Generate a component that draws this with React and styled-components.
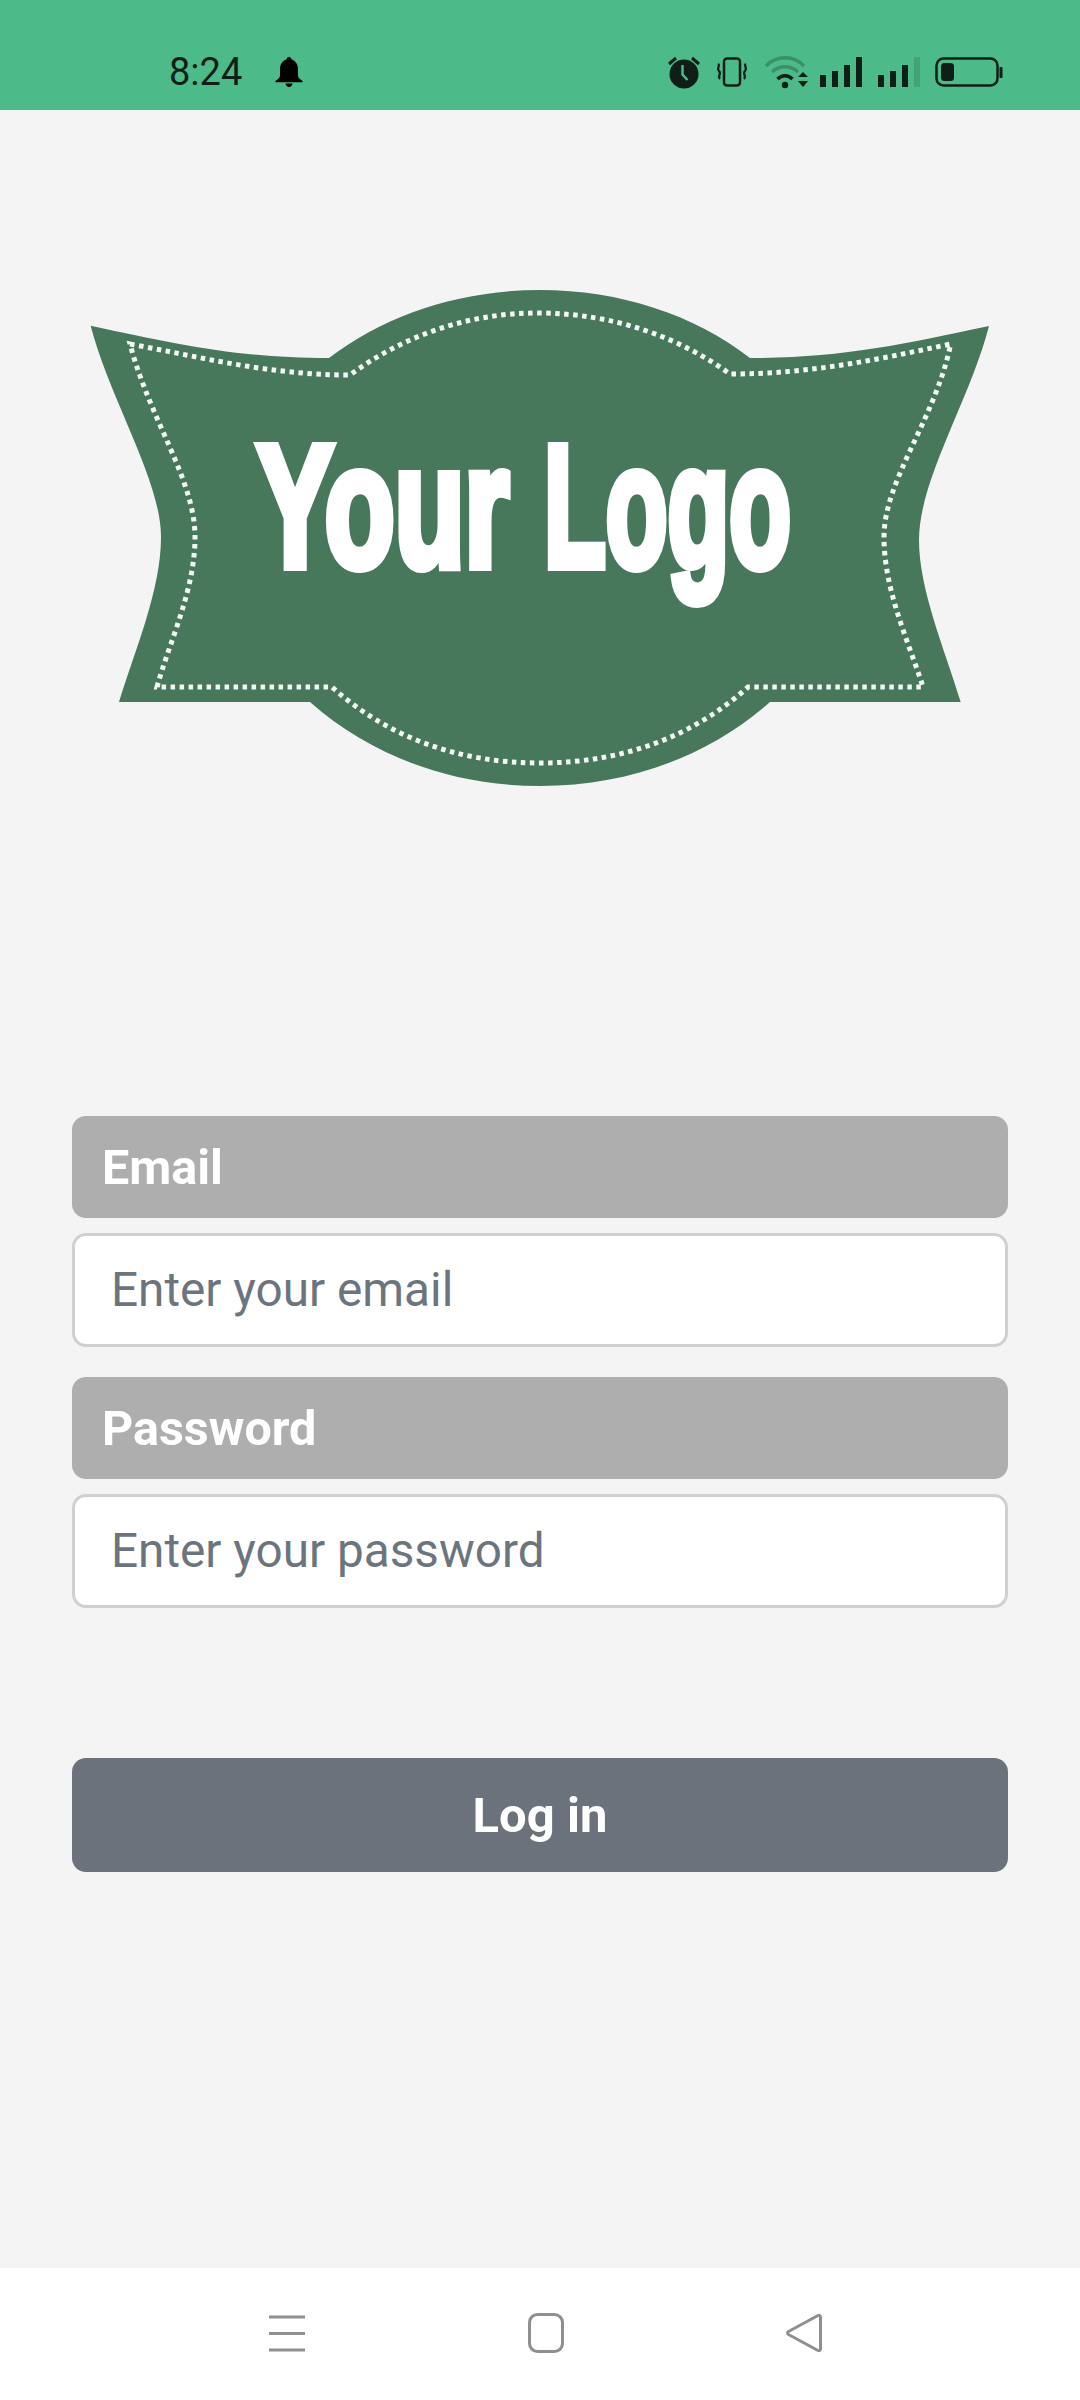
import React from "react";
import styled, { createGlobalStyle } from "styled-components";

const Global = createGlobalStyle`
  html, body { margin: 0; padding: 0; background: #f4f4f4; }
  * { box-sizing: border-box; }
`;

const Screen = styled.div`
  width: 1080px;
  height: 2400px;
  display: flex;
  flex-direction: column;
  background: #f4f4f4;
  font-family: Roboto, "Liberation Sans", sans-serif;
  overflow: hidden;
`;

const StatusBar = styled.header`
  height: 110px;
  flex: none;
  display: flex;
  align-items: center;
  justify-content: space-between;
  padding: 34px 77px 0 169px;
  background: #4dba89;
  border-bottom: 1px solid #5fae8c;
`;

const StatusGroup = styled.div`
  display: flex;
  align-items: center;
  gap: ${(p) => p.$gap}px;
`;

const Clock = styled.span`
  font-size: 38px;
  line-height: 44px;
  color: #0d1f17;
`;

const Main = styled.main`
  flex: 1;
  display: flex;
  flex-direction: column;
`;

const LogoArt = styled.svg`
  display: block;
  width: 900px;
  height: 498px;
  margin: 179px 0 0 90px;
  flex: none;
`;

const LogoWord = styled.text`
  font-family: "Liberation Sans", Roboto, sans-serif;
  font-weight: 700;
  font-size: 173px;
  fill: #ffffff;
  stroke: #ffffff;
  stroke-width: 10px;
  stroke-linejoin: miter;
`;

const Form = styled.form`
  width: 936px;
  margin: 329px 0 0 72px;
  display: flex;
  flex-direction: column;
`;

const FieldLabel = styled.label`
  display: flex;
  align-items: center;
  height: 102px;
  margin-bottom: 15px;
  padding-left: 30px;
  border-radius: 14px;
  background: #aeaeae;
  color: #ffffff;
  font-size: 48.500px;
  font-weight: 700;
`;

const FieldInput = styled.input`
  display: block;
  width: 100%;
  height: 114px;
  margin-bottom: 30px;
  padding: 0 36px;
  border: 3px solid #d0d0d0;
  border-radius: 14px;
  background: #ffffff;
  font-family: inherit;
  font-size: 47.700px;
  color: #6c757d;
  outline: none;
  &::placeholder { color: #6c757d; opacity: 1; }
`;

const Submit = styled.button`
  height: 114px;
  margin-top: 120px;
  border: none;
  border-radius: 14px;
  background: #6c727c;
  color: #ffffff;
  font-family: inherit;
  font-size: 49px;
  font-weight: 700;
`;

const NavBar = styled.nav`
  height: 132px;
  flex: none;
  display: flex;
  align-items: flex-start;
  gap: 222px;
  padding: 45px 0 0 268px;
  background: #ffffff;
`;

const WifiArt = styled.svg`
  margin: 0 -4px 0 2px;
`;

const Bell = () => (
  <svg width="28" height="32" viewBox="0 0 28 32">
    <path fill="#000" d="M14 1c1.500 0 2.400 1 2.500 2.400C21 4.700 23 8.600 23 13v6.500c0 2 1.600 3.400 4.500 5.500v1.200H.5V25c2.900-2.100 4.500-3.500 4.500-5.500V13c0-4.400 2-8.300 6.500-9.600C11.600 2 12.500 1 14 1z" />
    <path fill="#000" d="M10.500 27.500h7c-.3 2-1.700 3.500-3.500 3.500s-3.200-1.500-3.500-3.500z" />
  </svg>
);

const Alarm = () => (
  <svg width="34" height="34" viewBox="0 0 34 34">
    <circle cx="17" cy="19" r="14.500" fill="#0d1f17" />
    <path d="M2 9 9 3M32 9 25 3" stroke="#0d1f17" strokeWidth="3" fill="none" />
    <path d="M15.500 10v9.500l5 5.500" stroke="#4dba89" strokeWidth="2.500" fill="none" />
  </svg>
);

const Vibrate = () => (
  <svg width="34" height="30" viewBox="0 0 34 30">
    <rect x="9" y="1.500" width="16" height="27" rx="3" fill="none" stroke="#0d1f17" strokeWidth="2.500" />
    <path d="M3 7c3 2-2 4 1 7s-2 5 1 8M31 7c-3 2 2 4-1 7s2 5-1 8" fill="none" stroke="#0d1f17" strokeWidth="2.200" />
  </svg>
);

const Wifi = () => (
  <WifiArt width="44" height="34" viewBox="0 0 44 34">
    <path d="M1 11C11 0 29 0 39 11" fill="none" stroke="#0d1f17" strokeOpacity=".28" strokeWidth="3.500" />
    <path d="M7 17C14 10 26 10 33 17" fill="none" stroke="#0d1f17" strokeOpacity=".28" strokeWidth="3.500" />
    <path d="M12.500 24C17 19.500 23 19.500 27.500 24" fill="none" stroke="#0d1f17" strokeWidth="3.500" />
    <circle cx="20" cy="30" r="3.200" fill="#0d1f17" />
    <path d="M33 22l5-5 5 5zM33 26h10l-5 6z" fill="#0d1f17" />
  </WifiArt>
);

const Signal = ({ faded }) => (
  <svg width="44" height="30" viewBox="0 0 44 30">
    <rect x="1" y="18" width="6" height="12" fill="#0d1f17" />
    <rect x="13" y="14" width="6" height="16" fill="#0d1f17" />
    <rect x="25" y="8" width="6" height="22" fill="#0d1f17" />
    <rect x="37" y="0" width="6" height="30" fill="#0d1f17" fillOpacity={faded ? 0.15 : 1} />
  </svg>
);

const Battery = () => (
  <svg width="68" height="30" viewBox="0 0 68 30">
    <rect x="1.500" y="1.500" width="61" height="27" rx="7" fill="none" stroke="#0d1f17" strokeWidth="2.500" />
    <rect x="6" y="6" width="13" height="18" rx="3.500" fill="#0d1f17" />
    <rect x="64.500" y="10" width="3" height="11" rx="1" fill="#0d1f17" />
  </svg>
);

const Menu = () => (
  <svg width="38" height="40" viewBox="0 0 38 40">
    <path d="M1 4h36M1 20.500h36M1 37h36" stroke="#8f8f8f" strokeWidth="3" fill="none" />
  </svg>
);

const Home = () => (
  <svg width="36" height="40" viewBox="0 0 36 40">
    <rect x="1.500" y="1.500" width="33" height="37" rx="8" fill="none" stroke="#8f8f8f" strokeWidth="3" />
  </svg>
);

const Back = () => (
  <svg width="36" height="40" viewBox="0 0 36 40">
    <path d="M32 2.500 2.500 18.500c-1.200.8-1.200 2.200 0 3L32 37.500c1.200.6 2.500 0 2.500-1.500V4c0-1.500-1.300-2.100-2.500-1.500z" fill="none" stroke="#8f8f8f" strokeWidth="3" strokeLinejoin="round" />
  </svg>
);

const outer = "M90.700 325.700C180 345 240 358 329 358C385 315 460 290 540 290C620 290 695 315 750 358C840 358 900 345 989 326C970 400 919 480 919 540C919 590 945 650 960.700 702L770 702C710 755 630 786 540 786C450 786 370 755 310 702L119 702C135 650 161 590 161 537C161 480 110 400 90.700 326Z";
const inner = "M130 344C205 358 270 375 350 375C400 338 465 313 537 313C615 313 680 338 730 374C810 374 875 360 950.700 344C935 420 884 480 884 537C884 590 908 640 923 687L748 687C695 735 625 763 540 763C455 763 385 735 332 687L157 687C170 640 195 590 195 537C195 480 150 420 130 344Z";

const Logo = () => (
  <LogoArt viewBox="90 289 900 498">
    <path d={outer} fill="#48785b" />
    <path d={inner} fill="none" stroke="#f2f8f4" strokeWidth="5" strokeDasharray="4.500 4.500" />
    <LogoWord x="257" y="566" textLength="252" lengthAdjust="spacingAndGlyphs">Your</LogoWord>
    <LogoWord x="544" y="566" textLength="247" lengthAdjust="spacingAndGlyphs">Logo</LogoWord>
  </LogoArt>
);

export default function App() {
  return (
    <Screen>
      <Global />
      <StatusBar>
        <StatusGroup $gap={33}>
          <Clock>8:24</Clock>
          <Bell />
        </StatusGroup>
        <StatusGroup $gap={14}>
          <Alarm />
          <Vibrate />
          <Wifi />
          <Signal />
          <Signal faded />
          <Battery />
        </StatusGroup>
      </StatusBar>
      <Main>
        <Logo />
        <Form>
          <FieldLabel htmlFor="email">Email</FieldLabel>
          <FieldInput id="email" placeholder="Enter your email" />
          <FieldLabel htmlFor="password">Password</FieldLabel>
          <FieldInput id="password" placeholder="Enter your password" />
          <Submit type="button">Log in</Submit>
        </Form>
      </Main>
      <NavBar>
        <Menu />
        <Home />
        <Back />
      </NavBar>
    </Screen>
  );
}
